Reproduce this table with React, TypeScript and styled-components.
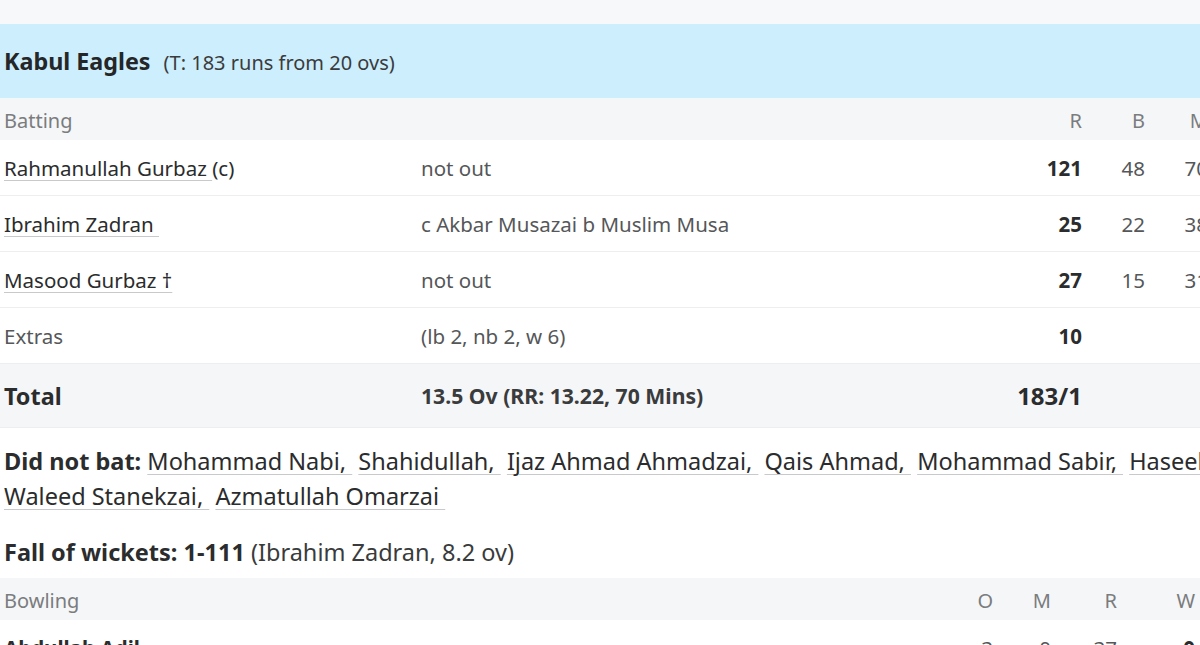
import React from "react";
import styled, { createGlobalStyle } from "styled-components";

const Global = createGlobalStyle`
  html, body { margin: 0; padding: 0; background: #ffffff; overflow: hidden; }
  body { font-family: "Noto Sans", "Open Sans", Arial, sans-serif; color: #2b2c2d; }
`;

const Page = styled.div`
  width: 1400px;
  display: flex;
  flex-direction: column;
`;

const TopBand = styled.div`
  height: 24px;
  background: #f7f8fa;
`;

const TeamHeader = styled.div`
  height: 74px;
  background: #cdeefd;
  display: flex;
  align-items: center;
  gap: 13px;
  padding-left: 4px;
`;

const TeamName = styled.span`
  font-size: 23.3px;
  font-weight: 700;
  color: #242627;
`;

const Target = styled.span`
  font-size: 20px;
  color: #3a3b3c;
  padding-top: 2px;
`;

const BatGrid = styled.div<{ $h: number; $bg?: string; $border?: boolean }>`
  display: grid;
  grid-template-columns: 417px 598px repeat(6, 63px);
  align-items: center;
  height: ${(p) => p.$h}px;
  padding-left: 4px;
  background: ${(p) => p.$bg || "#ffffff"};
  border-bottom: ${(p) => (p.$border ? "1px solid #eceef0" : "none")};
  box-sizing: border-box;
  font-size: 20.5px;
`;

const BowlGrid = styled.div<{ $h: number; $bg?: string }>`
  display: grid;
  grid-template-columns: 929px 60px 58px 66px 78px 70px 70px;
  align-items: center;
  height: ${(p) => p.$h}px;
  padding-left: 4px;
  background: ${(p) => p.$bg || "#ffffff"};
  box-sizing: border-box;
  font-size: 20.5px;
`;

const HeadCell = styled.span<{ $right?: boolean }>`
  color: #7a7c7e;
  font-size: 20px;
  text-align: ${(p) => (p.$right ? "right" : "left")};
  white-space: nowrap;
  padding-top: 3px;
`;

const PlayerLink = styled.span`
  color: #2b2c2d;
  text-decoration: underline;
  text-decoration-color: #c8c9cb;
  text-decoration-thickness: 1px;
  text-underline-offset: 4px;
  white-space: pre;
`;

const NameCell = styled.span<{ $bold?: boolean; $big?: boolean }>`
  color: ${(p) => (p.$bold ? "#2b2c2d" : "#555759")};
  font-weight: ${(p) => (p.$bold ? 700 : 400)};
  font-size: ${(p) => (p.$big ? "23.4px" : "inherit")};
  white-space: nowrap;
`;

const Dismissal = styled.span<{ $bold?: boolean }>`
  color: ${(p) => (p.$bold ? "#3a3b3c" : "#555759")};
  font-weight: ${(p) => (p.$bold ? 700 : 400)};
  font-size: ${(p) => (p.$bold ? "21.2px" : "inherit")};
  white-space: nowrap;
`;

const Num = styled.span<{ $bold?: boolean; $big?: boolean }>`
  text-align: right;
  justify-self: end;
  white-space: nowrap;
  color: ${(p) => (p.$bold ? "#2b2c2d" : "#555759")};
  font-weight: ${(p) => (p.$bold ? 700 : 400)};
  font-size: ${(p) => (p.$big ? "24px" : "inherit")};
`;

const Para = styled.div<{ $mt: number }>`
  margin-top: ${(p) => p.$mt}px;
  padding-left: 4px;
  font-size: 23.5px;
  line-height: 35px;
  color: #3a3b3c;
  width: 1340px;
`;

const Label = styled.span`
  font-weight: 700;
  color: #2b2c2d;
`;

const Spacer = styled.div`
  height: 8px;
`;

const Plain = styled.span`
  color: #2b2c2d;
`;

const batters = [
  { name: "Rahmanullah Gurbaz ", suffix: "(c)", how: "not out", r: "121", b: "48", m: "70", f: "11", s: "7", sr: "252.08" },
  { name: "Ibrahim Zadran ", suffix: "", how: "c Akbar Musazai b Muslim Musa", r: "25", b: "22", m: "38", f: "3", s: "0", sr: "113.63" },
  { name: "Masood Gurbaz †", suffix: "", how: "not out", r: "27", b: "15", m: "31", f: "2", s: "2", sr: "180.00" },
];

const dnb = [
  "Mohammad Nabi, ",
  "Shahidullah, ",
  "Ijaz Ahmad Ahmadzai, ",
  "Qais Ahmad, ",
  "Mohammad Sabir, ",
  "Haseebullah Khan, ",
  "Waleed Stanekzai, ",
  "Azmatullah Omarzai ",
];

export default function App() {
  return (
    <Page>
      <Global />
      <TopBand />
      <TeamHeader>
        <TeamName>Kabul Eagles</TeamName>
        <Target>(T: 183 runs from 20 ovs)</Target>
      </TeamHeader>
      <BatGrid $h={42} $bg="#f5f6f8">
        <HeadCell>Batting</HeadCell>
        <HeadCell />
        <HeadCell $right>R</HeadCell>
        <HeadCell $right>B</HeadCell>
        <HeadCell $right>M</HeadCell>
        <HeadCell $right>4s</HeadCell>
        <HeadCell $right>6s</HeadCell>
        <HeadCell $right>SR</HeadCell>
      </BatGrid>
      {batters.map((b) => (
        <BatGrid key={b.name} $h={56} $border>
          <NameCell>
            <PlayerLink>{b.name}</PlayerLink>
            {b.suffix && <Plain>{b.suffix}</Plain>}
          </NameCell>
          <Dismissal>{b.how}</Dismissal>
          <Num $bold>{b.r}</Num>
          <Num>{b.b}</Num>
          <Num>{b.m}</Num>
          <Num>{b.f}</Num>
          <Num>{b.s}</Num>
          <Num>{b.sr}</Num>
        </BatGrid>
      ))}
      <BatGrid $h={56} $border>
        <NameCell>Extras</NameCell>
        <Dismissal>(lb 2, nb 2, w 6)</Dismissal>
        <Num $bold>10</Num>
      </BatGrid>
      <BatGrid $h={64} $bg="#f5f6f8" $border>
        <NameCell $bold $big>Total</NameCell>
        <Dismissal $bold>13.5 Ov (RR: 13.22, 70 Mins)</Dismissal>
        <Num $bold $big>183/1</Num>
      </BatGrid>
      <Para $mt={16}>
        <Label>Did not bat: </Label>
        {dnb.map((n) => (
          <React.Fragment key={n}>
            <PlayerLink>{n}</PlayerLink>{" "}
          </React.Fragment>
        ))}
      </Para>
      <Para $mt={21}>
        <Label>Fall of wickets: 1-111</Label> (Ibrahim Zadran, 8.2 ov)
      </Para>
      <Spacer />
      <BowlGrid $h={42} $bg="#f5f6f8">
        <HeadCell>Bowling</HeadCell>
        <HeadCell $right>O</HeadCell>
        <HeadCell $right>M</HeadCell>
        <HeadCell $right>R</HeadCell>
        <HeadCell $right>W</HeadCell>
        <HeadCell $right>ECON</HeadCell>
        <HeadCell $right>0s</HeadCell>
      </BowlGrid>
      <BowlGrid $h={56}>
        <NameCell $bold>Abdullah Adil</NameCell>
        <Num>3</Num>
        <Num>0</Num>
        <Num>37</Num>
        <Num $bold>0</Num>
        <Num>12.33</Num>
        <Num>5</Num>
      </BowlGrid>
    </Page>
  );
}
